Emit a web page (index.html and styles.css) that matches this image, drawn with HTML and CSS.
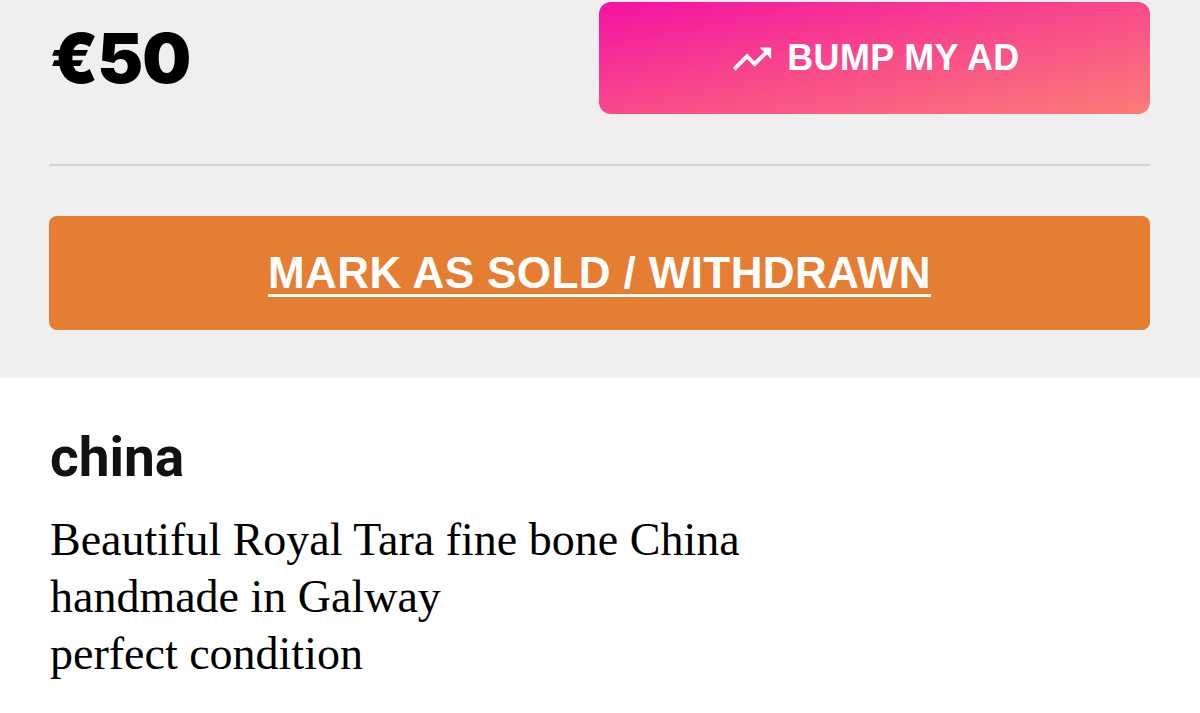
FILE: index.html
```html
<!DOCTYPE html>
<html lang="en">
<head>
<meta charset="utf-8">
<title>china</title>
<link rel="stylesheet" href="styles.css">
</head>
<body>
<div class="top">
  <div class="price-row">
    <div class="price">€50</div>
    <button class="bump" type="button">
      <svg class="bump-icon" viewBox="0 0 24 24" aria-hidden="true"><path d="M16 6l2.29 2.29-4.88 4.88-4-4L2 16.59 3.41 18l6-6 4 4 6.3-6.29L22 12V6z"/></svg>
      <span>BUMP MY AD</span>
    </button>
  </div>
  <div class="divider"></div>
  <button class="sold" type="button"><span>MARK AS SOLD / WITHDRAWN</span></button>
</div>
<div class="content">
  <h1 class="title">china</h1>
  <p class="desc">Beautiful Royal Tara fine bone China<br>handmade in Galway<br>perfect condition</p>
</div>
</body>
</html>
```

FILE: styles.css
```css
* { box-sizing: border-box; }
html, body { margin: 0; padding: 0; background: #ffffff; }
body { width: 1200px; height: 713px; overflow: hidden; }

.top {
  background: #efefef;
  padding: 2px 50px 48px 49px;
}

.price-row {
  display: flex;
  align-items: center;
  justify-content: space-between;
}

.price {
  font-family: Inter, "Liberation Sans", sans-serif;
  font-weight: 900;
  font-size: 69px;
  color: #000;
  margin-left: 1px;
  letter-spacing: -1px;
}

.bump {
  width: 551px;
  height: 112px;
  border: none;
  border-radius: 12px;
  background: linear-gradient(to bottom right, #f412a2 0%, #f84a8a 50%, #fc7c77 100%);
  color: #fff;
  display: flex;
  align-items: center;
  justify-content: center;
  gap: 12px;
  font-family: "Liberation Sans", Arial, sans-serif;
  font-weight: 700;
  font-size: 36px;
  letter-spacing: 0.3px;
  padding: 0;
  cursor: pointer;
}

.bump-icon {
  width: 46px;
  height: 46px;
  fill: #fff;
  margin-top: 1px;
}

.divider {
  height: 2px;
  background: #d4d4d4;
  margin: 50px 0 50px 0;
}

.sold {
  width: 100%;
  height: 114px;
  border: none;
  border-radius: 8px;
  background: #e57e32;
  color: #fff;
  font-family: "Liberation Sans", Arial, sans-serif;
  font-weight: 700;
  font-size: 44px;
  letter-spacing: 0.4px;
  padding: 0;
  display: flex;
  align-items: center;
  justify-content: center;
  cursor: pointer;
}

.sold span {
  text-decoration: underline;
  text-decoration-thickness: 3px;
  text-underline-offset: 6px;
}

.content {
  padding: 46px 50px 0 50px;
}

.title {
  margin: 0;
  font-family: Roboto, "Liberation Sans", sans-serif;
  font-weight: 700;
  font-size: 55px;
  line-height: 1.2;
  color: #111;
}

.desc {
  margin: 21px 0 0 0;
  font-family: "Liberation Serif", "Times New Roman", serif;
  font-size: 46px;
  line-height: 57px;
  color: #000;
}
```
